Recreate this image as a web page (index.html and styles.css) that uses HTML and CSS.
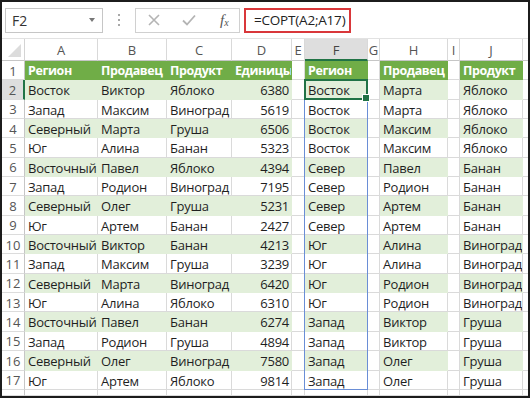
FILE: index.html
```html
<!DOCTYPE html>
<html lang="ru">
<head>
<meta charset="utf-8">
<title>СОРТ</title>
<link rel="stylesheet" href="styles.css">
</head>
<body>
<div class="frame">
  <div class="fbar">
    <div class="namebox"><span class="nb-text">F2</span><span class="nb-arrow"></span></div>
    <div class="dots"><i></i><i></i><i></i></div>
    <div class="btns">
      <svg class="ico" width="14" height="14" viewBox="0 0 14 14"><path d="M2 2 L12 12 M12 2 L2 12" stroke="#b4b4b4" stroke-width="1.6" fill="none"/></svg>
      <svg class="ico" width="16" height="14" viewBox="0 0 16 14"><path d="M2 7.5 L6 11.5 L14 2.5" stroke="#b4b4b4" stroke-width="1.8" fill="none"/></svg>
      <span class="fx">f<sub>x</sub></span>
    </div>
    <div class="finput"><div class="formula">=СОРТ(A2;A17)</div></div>
  </div>
  <div class="sheet">
    <div class="corner"></div>
    <div class="ch">A</div><div class="ch">B</div><div class="ch">C</div><div class="ch">D</div><div class="ch">E</div><div class="ch selc">F</div><div class="ch">G</div><div class="ch">H</div><div class="ch">I</div><div class="ch">J</div><div class="ch"></div>

    <div class="rh">1</div><div class="c h">Регион</div><div class="c h">Продавец</div><div class="c h">Продукт</div><div class="c h">Единицы</div><div class="c"></div><div class="c h">Регион</div><div class="c"></div><div class="c h">Продавец</div><div class="c"></div><div class="c h">Продукт</div><div class="c"></div>

    <div class="rh selr">2</div><div class="c b">Восток</div><div class="c b">Виктор</div><div class="c b">Яблоко</div><div class="c b n">6380</div><div class="c"></div><div class="c b">Восток</div><div class="c"></div><div class="c b">Марта</div><div class="c"></div><div class="c b">Яблоко</div><div class="c"></div>

    <div class="rh">3</div><div class="c">Запад</div><div class="c">Максим</div><div class="c">Виноград</div><div class="c n">5619</div><div class="c"></div><div class="c">Восток</div><div class="c"></div><div class="c">Марта</div><div class="c"></div><div class="c">Яблоко</div><div class="c"></div>

    <div class="rh">4</div><div class="c b">Северный</div><div class="c b">Марта</div><div class="c b">Груша</div><div class="c b n">6506</div><div class="c"></div><div class="c b">Восток</div><div class="c"></div><div class="c b">Максим</div><div class="c"></div><div class="c b">Яблоко</div><div class="c"></div>

    <div class="rh">5</div><div class="c">Юг</div><div class="c">Алина</div><div class="c">Банан</div><div class="c n">5323</div><div class="c"></div><div class="c">Восток</div><div class="c"></div><div class="c">Максим</div><div class="c"></div><div class="c">Яблоко</div><div class="c"></div>

    <div class="rh">6</div><div class="c b">Восточный</div><div class="c b">Павел</div><div class="c b">Яблоко</div><div class="c b n">4394</div><div class="c"></div><div class="c b">Север</div><div class="c"></div><div class="c b">Павел</div><div class="c"></div><div class="c b">Банан</div><div class="c"></div>

    <div class="rh">7</div><div class="c">Запад</div><div class="c">Родион</div><div class="c">Виноград</div><div class="c n">7195</div><div class="c"></div><div class="c">Север</div><div class="c"></div><div class="c">Родион</div><div class="c"></div><div class="c">Банан</div><div class="c"></div>

    <div class="rh">8</div><div class="c b">Северный</div><div class="c b">Олег</div><div class="c b">Груша</div><div class="c b n">5231</div><div class="c"></div><div class="c b">Север</div><div class="c"></div><div class="c b">Артем</div><div class="c"></div><div class="c b">Банан</div><div class="c"></div>

    <div class="rh">9</div><div class="c">Юг</div><div class="c">Артем</div><div class="c">Банан</div><div class="c n">2427</div><div class="c"></div><div class="c">Север</div><div class="c"></div><div class="c">Артем</div><div class="c"></div><div class="c">Банан</div><div class="c"></div>

    <div class="rh">10</div><div class="c b">Восточный</div><div class="c b">Виктор</div><div class="c b">Банан</div><div class="c b n">4213</div><div class="c"></div><div class="c b">Юг</div><div class="c"></div><div class="c b">Алина</div><div class="c"></div><div class="c b">Виноград</div><div class="c"></div>

    <div class="rh">11</div><div class="c">Запад</div><div class="c">Максим</div><div class="c">Груша</div><div class="c n">3239</div><div class="c"></div><div class="c">Юг</div><div class="c"></div><div class="c">Алина</div><div class="c"></div><div class="c">Виноград</div><div class="c"></div>

    <div class="rh">12</div><div class="c b">Северный</div><div class="c b">Марта</div><div class="c b">Виноград</div><div class="c b n">6420</div><div class="c"></div><div class="c b">Юг</div><div class="c"></div><div class="c b">Родион</div><div class="c"></div><div class="c b">Виноград</div><div class="c"></div>

    <div class="rh">13</div><div class="c">Юг</div><div class="c">Алина</div><div class="c">Яблоко</div><div class="c n">6310</div><div class="c"></div><div class="c">Юг</div><div class="c"></div><div class="c">Родион</div><div class="c"></div><div class="c">Виноград</div><div class="c"></div>

    <div class="rh">14</div><div class="c b">Восточный</div><div class="c b">Павел</div><div class="c b">Банан</div><div class="c b n">6274</div><div class="c"></div><div class="c b">Запад</div><div class="c"></div><div class="c b">Виктор</div><div class="c"></div><div class="c b">Груша</div><div class="c"></div>

    <div class="rh">15</div><div class="c">Запад</div><div class="c">Родион</div><div class="c">Груша</div><div class="c n">4894</div><div class="c"></div><div class="c">Запад</div><div class="c"></div><div class="c">Виктор</div><div class="c"></div><div class="c">Груша</div><div class="c"></div>

    <div class="rh">16</div><div class="c b">Северный</div><div class="c b">Олег</div><div class="c b">Виноград</div><div class="c b n">7580</div><div class="c"></div><div class="c b">Запад</div><div class="c"></div><div class="c b">Олег</div><div class="c"></div><div class="c b">Груша</div><div class="c"></div>

    <div class="rh">17</div><div class="c">Юг</div><div class="c">Артем</div><div class="c">Яблоко</div><div class="c n">9814</div><div class="c"></div><div class="c">Запад</div><div class="c"></div><div class="c">Олег</div><div class="c"></div><div class="c">Груша</div><div class="c"></div>

    <div class="rh"></div><div class="c"></div><div class="c"></div><div class="c"></div><div class="c"></div><div class="c"></div><div class="c"></div><div class="c"></div><div class="c"></div><div class="c"></div><div class="c"></div><div class="c"></div>

    <div class="spill"></div>
    <div class="active"></div>
  </div>
</div>
</body>
</html>
```

FILE: styles.css
```css
* { box-sizing: border-box; }
html, body { margin: 0; padding: 0; background: #fff; }
body { width: 530px; height: 398px; overflow: hidden; font-family: "Open Sans", "Noto Sans", sans-serif; }

.frame {
  width: 530px; height: 398px;
  border: 2px solid #1c1c1c;
  display: flex; flex-direction: column;
  overflow: hidden;
  background: #fff;
}

/* formula bar */
.fbar {
  height: 37px; flex: none;
  display: flex; align-items: center;
  border-bottom: 1px solid #e2e2e2;
  padding-left: 3px;
}
.namebox {
  width: 98px; height: 25px;
  border: 1px solid #c6c6c6;
  display: flex; align-items: center; justify-content: space-between;
  padding: 0 7px 0 6px;
}
.nb-text { font-size: 14px; color: #333; }
.nb-arrow {
  width: 0; height: 0;
  border-left: 3.5px solid transparent; border-right: 3.5px solid transparent;
  border-top: 4px solid #777;
}
.dots {
  width: 32px; height: 25px;
  display: flex; flex-direction: column; align-items: center; justify-content: center; gap: 3px;
}
.dots i { display: block; width: 2px; height: 2px; background: #a8a8a8; }
.btns {
  width: 105px; height: 25px;
  border: 1px solid #d0d0d0;
  display: flex; align-items: center;
  padding-left: 11px;
}
.btns .ico:first-child { margin-right: 20px; }
.btns .ico:nth-child(2) { margin-right: 23px; }
.fx {
  font-family: "Liberation Serif", "DejaVu Serif", serif;
  font-style: italic; font-size: 15px; color: #555;
  line-height: 1;
}
.fx sub { font-size: 10px; vertical-align: -1px; }
.finput { flex: 1; height: 25px; margin-left: 4px; display: flex; align-items: center; }
.formula {
  width: 107px; height: 25px;
  border: 2.5px solid #d9373a;
  font-size: 13.5px; color: #222;
  display: flex; align-items: center;
  padding-left: 8px; white-space: nowrap;
  letter-spacing: -0.2px;
}

/* sheet grid */
.sheet {
  flex: 1;
  position: relative;
  display: grid;
  grid-template-columns: 23px 73px 69px 65px 60px 13px 63px 12px 68px 12px 63px 1fr;
  grid-template-rows: 22px repeat(17, 19.35px) 1fr;
  font-size: 13px;
  color: #1f1f1f;
}
.corner {
  position: relative;
  border-right: 1px solid #d4d4d4; border-bottom: 1px solid #c6c6c6;
}
.corner::after {
  content: ""; position: absolute; right: 3px; bottom: 3px;
  width: 0; height: 0;
  border-left: 13px solid transparent;
  border-bottom: 13px solid #dcdcdc;
}
.ch {
  display: flex; align-items: center; justify-content: center;
  color: #555; font-size: 13px;
  border-right: 1px solid #d9d9d9; border-bottom: 1px solid #c6c6c6;
  padding-top: 1px;
}
.ch.selc { background: #dedede; border-bottom: 2px solid #217346; color: #444; }
.rh {
  display: flex; align-items: center; justify-content: center;
  color: #555; font-size: 13px;
  border-right: 1px solid #c6c6c6; border-bottom: 1px solid #dcdcdc;
  padding-top: 1px;
}
.rh.selr { background: #dedede; border-right: 2px solid #217346; }
.c {
  border-right: 1px solid #dadada; border-bottom: 1px solid #dadada;
  white-space: nowrap; overflow: hidden;
  padding: 1px 2px 0 3px;
  line-height: 18px;
  letter-spacing: -0.25px;
}
.c.h { background: #70ad47; color: #fff; font-weight: 700; border-color: #70ad47; font-size: 12.5px; letter-spacing: -0.4px; }
.c.b { background: #e2efda; border-right-color: #e2efda; border-bottom-color: #e2efda; }
.c.n { text-align: right; }

.spill {
  position: absolute; inset: 0 0 0 -1px;
  grid-column: 7 / 8; grid-row: 3 / 19;
  border: 1px solid #6a8ed6;
  pointer-events: none;
}
.active {
  position: absolute; inset: -1px 0 0 -1px;
  grid-column: 7 / 8; grid-row: 3 / 4;
  border: 2px solid #217346;
}
.active::after {
  content: ""; position: absolute; right: -4px; bottom: -4px;
  width: 6px; height: 6px; background: #217346; border: 1px solid #fff;
}
```
